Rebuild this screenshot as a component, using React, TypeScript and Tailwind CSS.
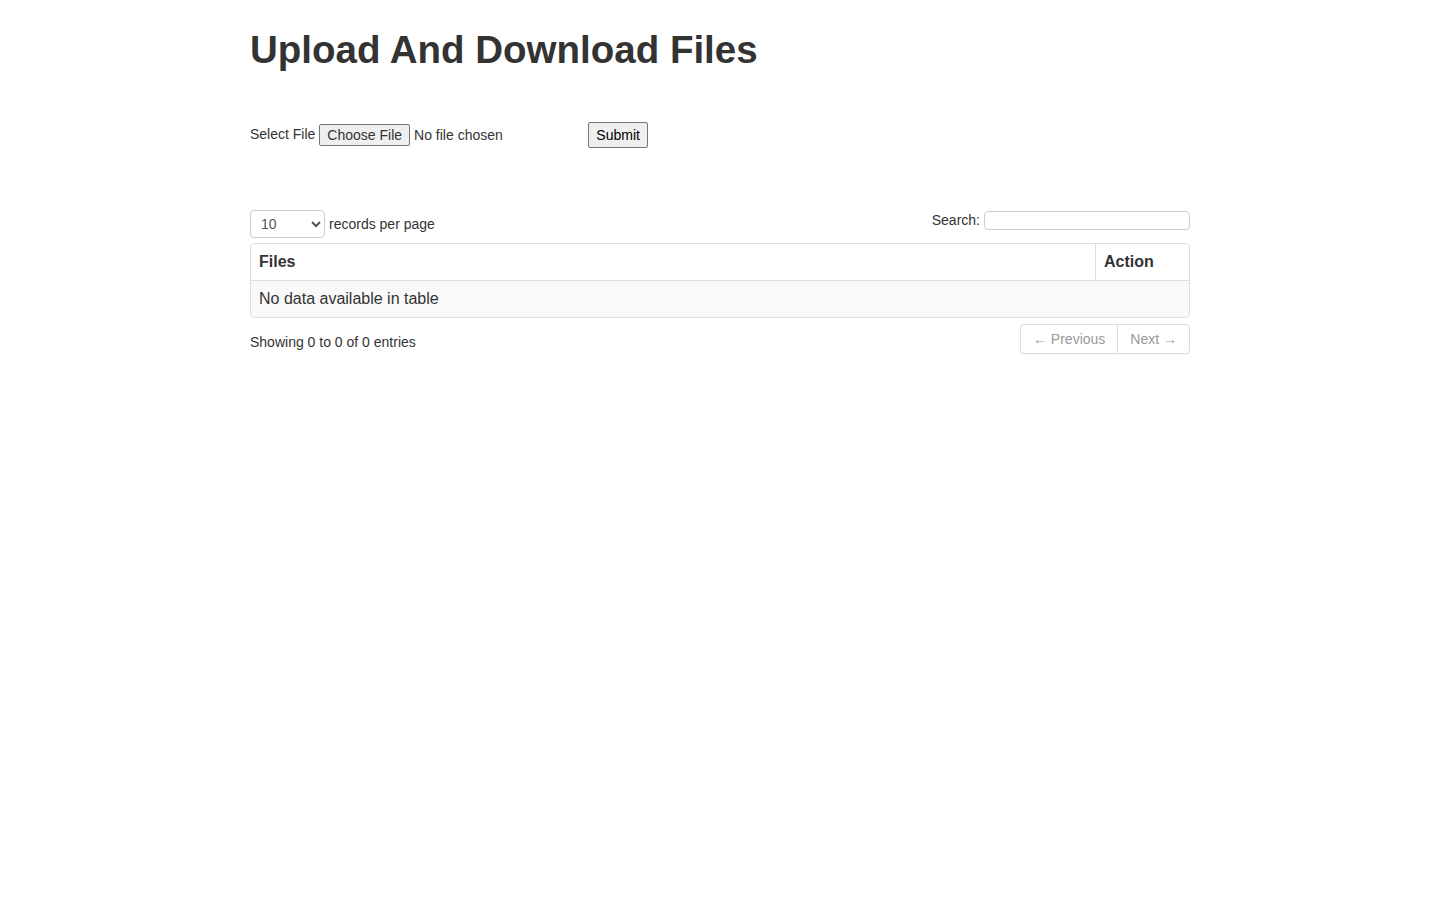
import React from 'react'

const App = () => {
  return (
    <div className="min-h-screen bg-white text-[#333] text-[14px] leading-[20px]" style={{ fontFamily: '"Liberation Sans", Arial, sans-serif' }}>
      <div className="w-[940px] mx-auto pt-[28px]">
        <h1 className="text-[38.5px] leading-[44px] font-bold">Upload And Download Files</h1>

        <form className="mt-[50px] flex items-center" onSubmit={(e) => e.preventDefault()}>
          <label className="mr-[4px] -mt-[2px]">Select File</label>
          <input type="file" className="w-[265px] text-[14px] text-[#333] file:mr-[4px] file:px-[7px] file:h-[22px] file:border file:border-[#767676] file:rounded-[2px] file:bg-[#efefef] file:text-[#333] file:text-[14px]" />
          <button type="submit" className="ml-[4px] h-[26px] px-[7px] text-[14px] text-black bg-[#efefef] border border-[#767676] rounded-[2px]">Submit</button>
        </form>

        <div className="mt-[62px] flex justify-between items-start">
          <div className="flex items-center">
            <select className="w-[75px] h-[28px] border border-[#ccc] rounded-[4px] pl-[6px] text-[#555] text-[14px] bg-white">
              <option>10</option>
              <option>25</option>
              <option>50</option>
              <option>100</option>
            </select>
            <span className="ml-[4px]">records per page</span>
          </div>
          <div className="flex items-center">
            <span className="mr-[4px]">Search:</span>
            <input type="text" className="w-[206px] h-[19px] border border-[#ccc] rounded-[4px] px-[4px] text-[14px] text-[#555]" />
          </div>
        </div>

        <table className="mt-[5px] w-full border-separate border-spacing-0 border border-[#ddd] rounded-[4px] text-[16px]">
          <thead>
            <tr>
              <th className="text-left font-bold px-[8px] py-[8px] leading-[20px]">Files</th>
              <th className="text-left font-bold px-[8px] py-[8px] leading-[20px] w-[94px] border-l border-[#ddd]">Action</th>
            </tr>
          </thead>
          <tbody>
            <tr className="bg-[#f9f9f9]">
              <td colSpan={2} className="px-[8px] py-[8px] leading-[20px] border-t border-[#ddd] rounded-b-[4px]">No data available in table</td>
            </tr>
          </tbody>
        </table>

        <div className="mt-[6px] flex justify-between items-start">
          <div className="pt-[8px]">Showing 0 to 0 of 0 entries</div>
          <div className="flex border border-[#ddd] rounded-[4px] text-[#999] h-[30px] shadow-[0_1px_2px_rgba(0,0,0,0.05)]">
            <span className="px-[12px] leading-[28px] border-r border-[#ddd]">← Previous</span>
            <span className="px-[12px] leading-[28px]">Next →</span>
          </div>
        </div>
      </div>
    </div>
  )
}

export default App
